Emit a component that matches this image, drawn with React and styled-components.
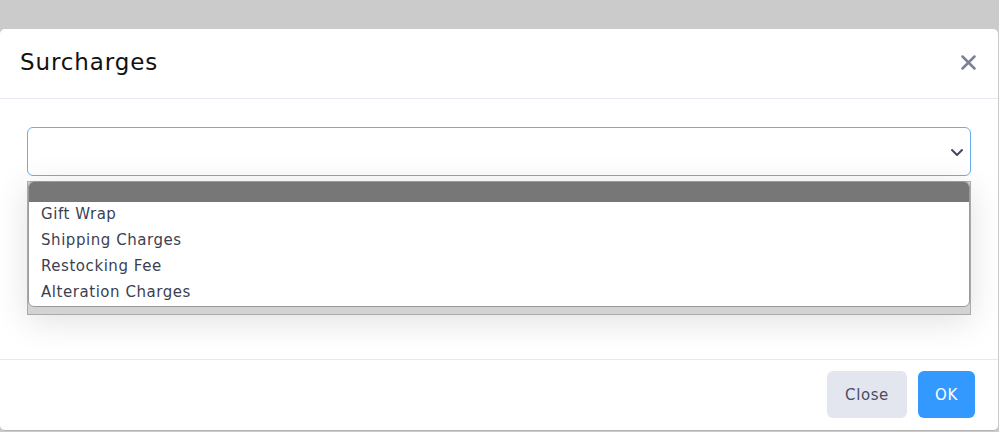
import React from 'react';
import styled, { createGlobalStyle } from 'styled-components';

const GlobalStyle = createGlobalStyle`
  html, body {
    margin: 0;
    padding: 0;
    background: #cbcbcb;
    font-family: "DejaVu Sans", "Noto Sans", sans-serif;
  }
`

const Overlay = styled.div`
  width: 999px;
  height: 432px;
  padding-top: 29px;
  box-sizing: border-box;
  overflow: hidden;
`

const Modal = styled.div`
  width: 998px;
  height: 402px;
  background: #ffffff;
  border-radius: 5px;
  border-bottom: 1px solid #b5b5b5;
  display: flex;
  flex-direction: column;
  box-sizing: border-box;
`

const Header = styled.div`
  height: 70px;
  padding: 0 20px 3px 20px;
  display: flex;
  align-items: center;
  justify-content: space-between;
  border-bottom: 1px solid #e8e8f2;
  box-sizing: border-box;
`

const Title = styled.h4`
  margin: 0;
  font-size: 23px;
  font-weight: 400;
  color: #111111;
  letter-spacing: 0.9px;
`

const CloseIcon = styled.button`
  border: none;
  background: none;
  padding: 0;
  width: 20px;
  height: 20px;
  display: flex;
  align-items: center;
  justify-content: center;
  color: #7b8099;
`

const Body = styled.div`
  flex: 1;
  padding: 28px 27px 0 27px;
  position: relative;
`

const SelectBox = styled.div`
  height: 49px;
  border: 1px solid #69adf0;
  border-radius: 6px;
  box-sizing: border-box;
  display: flex;
  align-items: center;
  justify-content: flex-end;
  padding-right: 3px;
  color: #444a5c;
`

const PopupBack = styled.div`
  position: absolute;
  top: 82px;
  left: 27px;
  width: 944px;
  height: 134px;
  background: #d3d3d3;
  border: 1px solid #aaaaaa;
  box-sizing: border-box;
  box-shadow: 0 6px 32px rgba(0, 0, 0, 0.12);
`

const Popup = styled.ul`
  position: absolute;
  top: 82px;
  left: 28px;
  width: 942px;
  margin: 0;
  padding: 0;
  list-style: none;
  background: #ffffff;
  border: 1px solid #9a9a9a;
  border-radius: 6px;
  overflow: hidden;
  box-sizing: border-box;
`

const Option = styled.li`
  height: ${p => (p.$blank ? '20px' : '26px')};
  line-height: 24px;
  padding-left: 12px;
  font-size: 15px;
  color: #3c3f52;
  background: ${p => (p.$active ? '#777777' : 'transparent')};
  letter-spacing: 0.55px;
`

const Footer = styled.div`
  height: 71px;
  border-top: 1px solid #e8e8f2;
  display: flex;
  align-items: center;
  justify-content: flex-end;
  gap: 11px;
  padding: 0 23px 1px 0;
  box-sizing: border-box;
`

const Button = styled.button`
  height: 47px;
  width: ${p => (p.$primary ? '57px' : '80px')};
  padding: 0;
  border: none;
  border-radius: 6px;
  font-family: inherit;
  font-size: 15px;
  letter-spacing: 0.6px;
  background: ${p => (p.$primary ? '#3399ff' : '#e3e6ef')};
  color: ${p => (p.$primary ? '#ffffff' : '#4a4d5e')};
`

const options = ['Gift Wrap', 'Shipping Charges', 'Restocking Fee', 'Alteration Charges'];

export default function App() {
  return (
    <Overlay>
      <GlobalStyle />
      <Modal>
        <Header>
          <Title>Surcharges</Title>
          <CloseIcon>
            <svg width="15" height="15" viewBox="0 0 15 15">
              <path d="M1.5 1.5 L13.5 13.5 M13.5 1.5 L1.5 13.5" stroke="currentColor" strokeWidth="2.5" strokeLinecap="round" />
            </svg>
          </CloseIcon>
        </Header>
        <Body>
          <SelectBox>
            <svg width="20" height="20" viewBox="0 0 20 20">
              <path d="M5 8 L10 13 L15 8" stroke="currentColor" strokeWidth="2" fill="none" strokeLinecap="round" strokeLinejoin="round" />
            </svg>
          </SelectBox>
          <PopupBack />
          <Popup>
            <Option $blank $active />
            {options.map(o => (
              <Option key={o}>{o}</Option>
            ))}
          </Popup>
        </Body>
        <Footer>
          <Button>Close</Button>
          <Button $primary>OK</Button>
        </Footer>
      </Modal>
    </Overlay>
  );
}
